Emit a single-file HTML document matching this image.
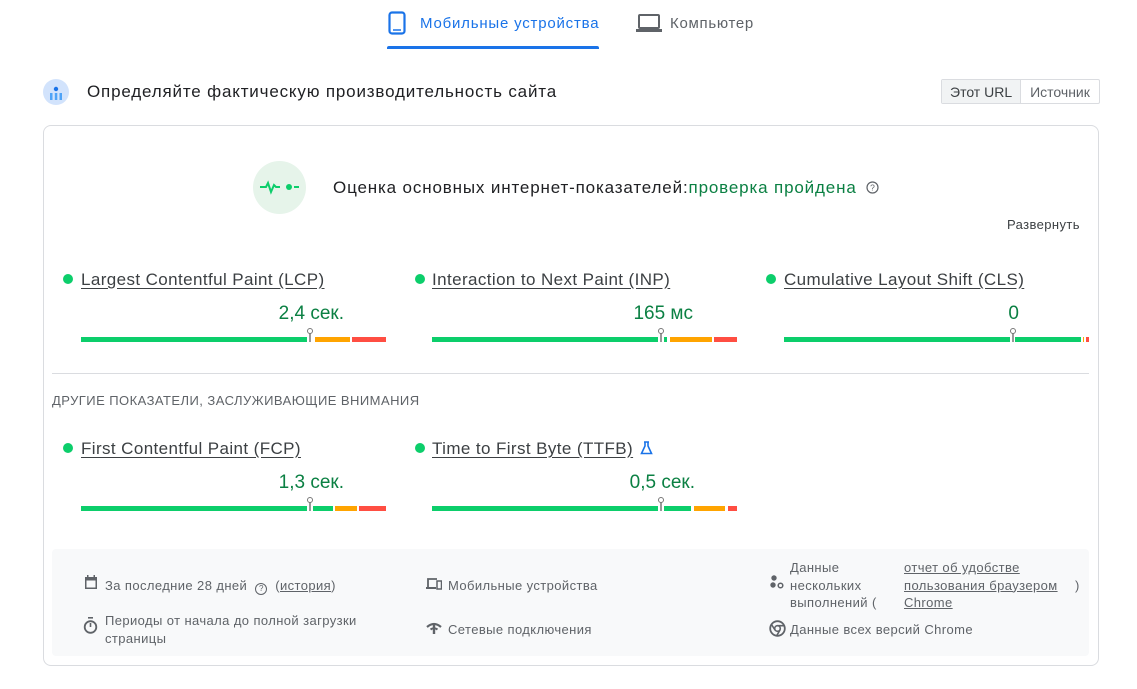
<!DOCTYPE html>
<html><head><meta charset="utf-8"><style>
*{margin:0;padding:0;box-sizing:border-box}
body{width:1137px;height:689px;background:#fff;font-family:"Liberation Sans","Noto Sans CJK SC",sans-serif;color:#202124;position:relative;overflow:hidden}
.a{position:absolute;white-space:nowrap}
.bar{position:absolute;height:5px}
.g{background:#0cce6b}.o{background:#ffa400}.r{background:#ff4e42}
.mk{position:absolute;width:2px;height:9px;background:#999}
.mk:before{content:"";position:absolute;left:-2px;top:-5px;width:4px;height:4px;border:1.2px solid #777;border-radius:50%;background:#fff}
.dot{position:absolute;width:10px;height:10px;border-radius:50%;background:#0cce6b}
.lk{font-size:17px;color:#3c4043;text-decoration:underline;text-underline-offset:3px;letter-spacing:0.4px}
.val{font-size:19px;color:#0b8043;text-align:right}
.ft{font-size:13px;color:#5f6368;line-height:17.5px;letter-spacing:0.4px}
</style></head><body>
<!-- tabs -->
<svg class="a" style="left:388px;top:11px" width="18" height="24" viewBox="0 0 18 24"><rect x="1.5" y="1.5" width="15" height="21" rx="2.5" fill="none" stroke="#1a73e8" stroke-width="2.2"/><line x1="5" y1="19" x2="13" y2="19" stroke="#1a73e8" stroke-width="1.5"/></svg>
<div class="a" style="left:420px;top:15px;font-size:15px;color:#1a73e8;letter-spacing:0.8px">Мобильные устройства</div>
<div class="a" style="left:387px;top:46px;width:212px;height:3px;background:#1a73e8;border-radius:2px 2px 0 0"></div>
<svg class="a" style="left:636px;top:13px" width="26" height="20" viewBox="0 0 26 20"><rect x="3" y="2" width="20" height="13" rx="1" fill="none" stroke="#5f6368" stroke-width="2"/><rect x="0" y="16" width="26" height="3" fill="#5f6368"/></svg>
<div class="a" style="left:670px;top:15px;font-size:15px;color:#5f6368;letter-spacing:0.7px">Компьютер</div>
<!-- header -->
<svg class="a" style="left:43px;top:79px" width="26" height="26" viewBox="0 0 26 26"><circle cx="13" cy="13" r="13" fill="#d2e3fc"/><circle cx="13" cy="10" r="2.2" fill="#1a73e8"/><rect x="7" y="14" width="2.5" height="7" fill="#4fa3f7"/><rect x="11.8" y="14" width="2.5" height="7" fill="#4fa3f7"/><rect x="16.5" y="14" width="2.5" height="7" fill="#4fa3f7"/></svg>
<div class="a" style="left:87px;top:82px;font-size:17px;color:#202124;letter-spacing:0.83px">Определяйте фактическую производительность сайта</div>
<div class="a" style="left:941px;top:79px;height:25px;border:1px solid #dadce0;border-radius:2px;font-size:14px;color:#3c4043;display:flex">
<div style="background:#f1f3f4;padding:4px 8px;border-right:1px solid #dadce0">Этот URL</div><div style="padding:4px 9px;color:#5f6368">Источник</div></div>
<!-- card -->
<div class="a" style="left:43px;top:125px;width:1056px;height:541px;border:1px solid #dadce0;border-radius:8px"></div>
<svg class="a" style="left:253px;top:161px" width="53" height="53" viewBox="0 0 53 53"><circle cx="26.5" cy="26.5" r="26.5" fill="#e6f4ea"/><path d="M7 26h6l2-4 3 9 3-7 2 2h4" fill="none" stroke="#0cce6b" stroke-width="2"/><circle cx="36" cy="26" r="3" fill="#0cce6b"/><line x1="41" y1="26" x2="46" y2="26" stroke="#0cce6b" stroke-width="2"/></svg>
<div class="a" style="left:333px;top:178px;font-size:17px;letter-spacing:0.85px">Оценка основных интернет-показателей:<span style="color:#0b8043">проверка пройдена</span></div>
<svg class="a" style="left:866px;top:181px" width="13" height="13" viewBox="0 0 13 13"><circle cx="6.5" cy="6.5" r="5.5" fill="none" stroke="#5f6368" stroke-width="1.2"/><text x="6.5" y="9.6" font-size="8.5" text-anchor="middle" fill="#5f6368" font-family="Liberation Sans">?</text></svg>
<div class="a" style="left:1007px;top:217px;font-size:13px;color:#3c4043;letter-spacing:0.4px">Развернуть</div>

<!-- LCP -->
<div class="dot" style="left:63px;top:274px"></div>
<div class="a lk" style="left:81px;top:270px">Largest Contentful Paint (LCP)</div>
<div class="a val" style="left:200px;width:144px;top:303px">2,4 сек.</div>
<div class="bar g" style="left:81px;top:337px;width:226px"></div><div class="mk" style="left:309px;top:333px"></div><div class="bar o" style="left:315px;top:337px;width:35px"></div><div class="bar r" style="left:352px;top:337px;width:34px"></div>
<!-- INP -->
<div class="dot" style="left:415px;top:274px"></div>
<div class="a lk" style="left:432px;top:270px">Interaction to Next Paint (INP)</div>
<div class="a val" style="left:550px;width:143px;top:303px">165 мс</div>
<div class="bar g" style="left:432px;top:337px;width:226px"></div><div class="mk" style="left:660px;top:333px"></div><div class="bar g" style="left:664px;top:337px;width:3px"></div><div class="bar o" style="left:670px;top:337px;width:42px"></div><div class="bar r" style="left:714px;top:337px;width:23px"></div>
<!-- CLS -->
<div class="dot" style="left:766px;top:274px"></div>
<div class="a lk" style="left:784px;top:270px">Cumulative Layout Shift (CLS)</div>
<div class="a val" style="left:900px;width:119px;top:303px">0</div>
<div class="bar g" style="left:784px;top:337px;width:226px"></div><div class="mk" style="left:1012px;top:333px"></div><div class="bar g" style="left:1015px;top:337px;width:66px"></div><div class="bar o" style="left:1083px;top:337px;width:1px"></div><div class="bar r" style="left:1086px;top:337px;width:3px"></div>

<div class="a" style="left:52px;top:373px;width:1037px;height:1px;background:#dadce0"></div>
<div class="a" style="left:52px;top:393px;font-size:13px;color:#5f6368;letter-spacing:0.45px">ДРУГИЕ ПОКАЗАТЕЛИ, ЗАСЛУЖИВАЮЩИЕ ВНИМАНИЯ</div>

<!-- FCP -->
<div class="dot" style="left:63px;top:443px"></div>
<div class="a lk" style="left:81px;top:439px">First Contentful Paint (FCP)</div>
<div class="a val" style="left:200px;width:144px;top:472px">1,3 сек.</div>
<div class="bar g" style="left:81px;top:506px;width:226px"></div><div class="mk" style="left:309px;top:502px"></div><div class="bar g" style="left:313px;top:506px;width:20px"></div><div class="bar o" style="left:335px;top:506px;width:22px"></div><div class="bar r" style="left:359px;top:506px;width:27px"></div>
<!-- TTFB -->
<div class="dot" style="left:415px;top:443px"></div>
<div class="a lk" style="left:432px;top:439px">Time to First Byte (TTFB)</div>
<svg class="a" style="left:640px;top:441px" width="13" height="14" viewBox="0 0 13 14"><path d="M4 1h5M5 1v4L1.5 12.5h10L8 5V1" fill="none" stroke="#1a73e8" stroke-width="1.6"/></svg>
<div class="a val" style="left:550px;width:145px;top:472px">0,5 сек.</div>
<div class="bar g" style="left:432px;top:506px;width:226px"></div><div class="mk" style="left:660px;top:502px"></div><div class="bar g" style="left:664px;top:506px;width:27px"></div><div class="bar o" style="left:694px;top:506px;width:31px"></div><div class="bar r" style="left:728px;top:506px;width:9px"></div>

<!-- footer -->
<div class="a" style="left:52px;top:549px;width:1037px;height:107px;background:#f8f9fa;border-radius:4px"></div>
<svg class="a" style="left:84px;top:575px" width="14" height="15" viewBox="0 0 14 15"><rect x="1" y="2" width="12" height="12" fill="#5f6368"/><rect x="2.5" y="5.5" width="9" height="7" fill="#f8f9fa"/><rect x="3" y="0" width="1.5" height="3" fill="#5f6368"/><rect x="9.5" y="0" width="1.5" height="3" fill="#5f6368"/></svg>
<div class="a ft" style="left:105px;top:577px">За последние 28 дней&nbsp;&nbsp;<span style="display:inline-block;width:12px;height:12px;border:1.2px solid #5f6368;border-radius:50%;font-size:8px;text-align:center;line-height:10px;vertical-align:-1px;letter-spacing:0">?</span>&nbsp;&nbsp;(<u>история</u>)</div>
<svg class="a" style="left:83px;top:617px" width="15" height="17" viewBox="0 0 15 17"><rect x="5" y="0" width="5" height="1.6" fill="#5f6368"/><circle cx="7.5" cy="10" r="5.8" fill="none" stroke="#5f6368" stroke-width="1.8"/><line x1="7.5" y1="10" x2="7.5" y2="6" stroke="#5f6368" stroke-width="1.6"/></svg>
<div class="a ft" style="left:105px;top:612px">Периоды от начала до полной загрузки<br>страницы</div>
<svg class="a" style="left:426px;top:577px" width="16" height="13" viewBox="0 0 16 13"><path d="M2 10V2h9" fill="none" stroke="#5f6368" stroke-width="1.8"/><rect x="0" y="10" width="10" height="2" fill="#5f6368"/><rect x="11" y="4" width="4.5" height="8" fill="none" stroke="#5f6368" stroke-width="1.5"/></svg>
<div class="a ft" style="left:448px;top:577px">Мобильные устройства</div>
<svg class="a" style="left:426px;top:622px" width="16" height="13" viewBox="0 0 16 13"><path d="M1 5Q8-1 15 5" fill="none" stroke="#5f6368" stroke-width="2.2"/><path d="M8 3v9" stroke="#5f6368" stroke-width="2.4"/><path d="M4.5 7.5Q8 5 11.5 7.5" fill="none" stroke="#5f6368" stroke-width="2"/></svg>
<div class="a ft" style="left:448px;top:621px">Сетевые подключения</div>
<svg class="a" style="left:769px;top:574px" width="16" height="16" viewBox="0 0 16 16"><circle cx="5" cy="4" r="2.7" fill="#5f6368"/><circle cx="4" cy="11" r="2.7" fill="#5f6368"/><circle cx="11.5" cy="11.5" r="2.3" fill="none" stroke="#5f6368" stroke-width="1.5"/></svg>
<div class="a ft" style="left:790px;top:559px">Данные<br>нескольких<br>выполнений (</div>
<div class="a ft" style="left:904px;top:559px;text-decoration:underline">отчет об удобстве<br>пользования браузером<br>Chrome</div>
<div class="a ft" style="left:1075px;top:577px">)</div>
<svg class="a" style="left:769px;top:620px" width="17" height="17" viewBox="0 0 17 17"><circle cx="8.5" cy="8.5" r="7.3" fill="none" stroke="#5f6368" stroke-width="1.8"/><circle cx="8.5" cy="8.5" r="2.8" fill="none" stroke="#5f6368" stroke-width="1.6"/><path d="M8.5 5.7h6.5M6 10l-3.5-5.5M11 10l-3.5 6" stroke="#5f6368" stroke-width="1.6" fill="none"/></svg>
<div class="a ft" style="left:790px;top:621px">Данные всех версий Chrome</div>
</body></html>
